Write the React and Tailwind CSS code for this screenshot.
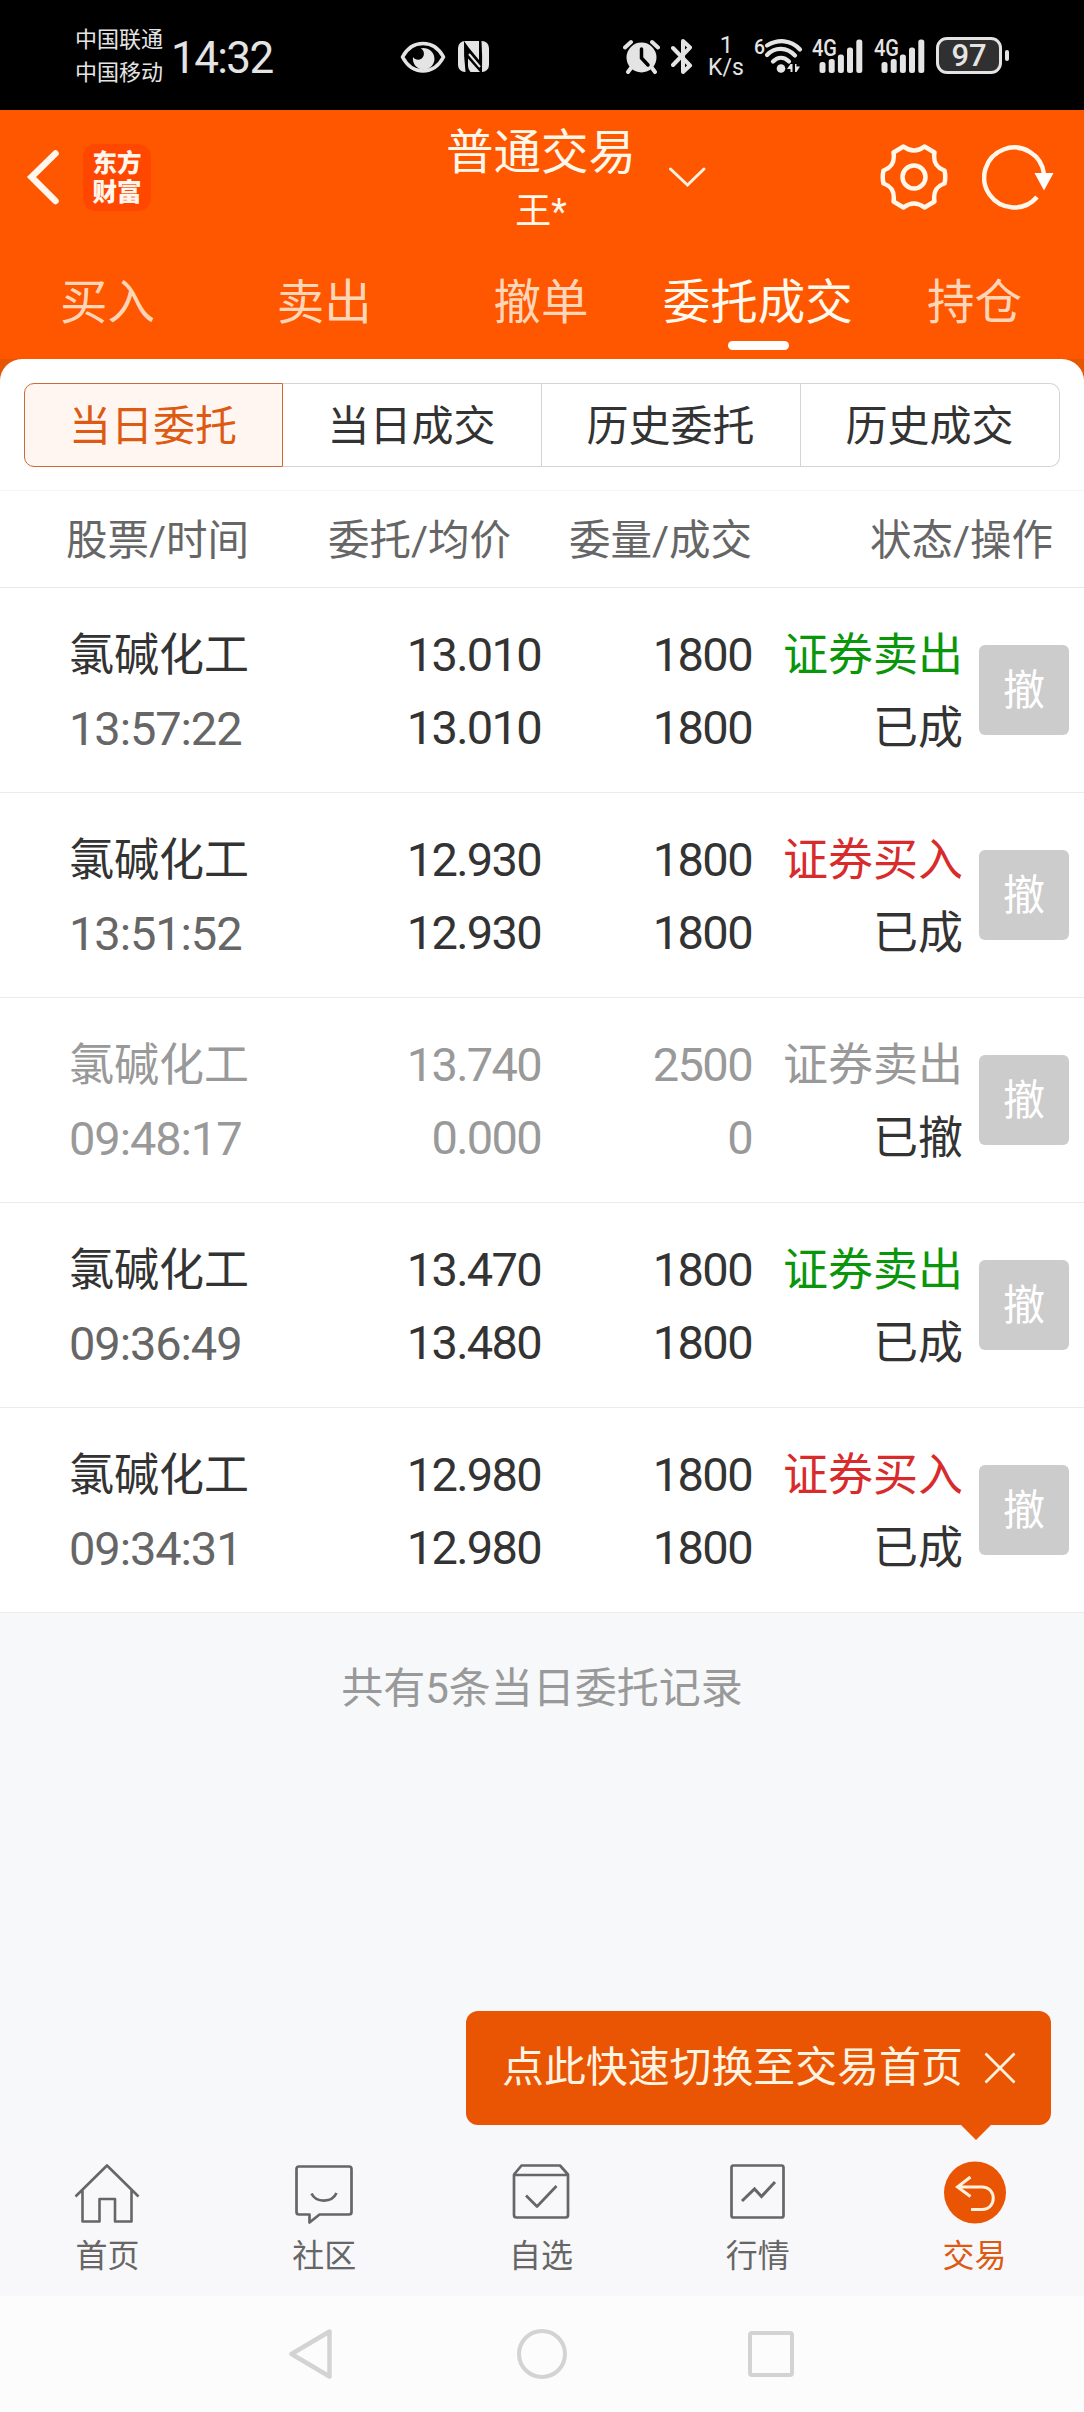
const ROWS = [
  { name: '氯碱化工', time: '13:57:22', price: '13.010', avg: '13.010', qty: '1800', done: '1800', side: '证券卖出', state: '已成', tone: 'sell' },
  { name: '氯碱化工', time: '13:51:52', price: '12.930', avg: '12.930', qty: '1800', done: '1800', side: '证券买入', state: '已成', tone: 'buy' },
  { name: '氯碱化工', time: '09:48:17', price: '13.740', avg: '0.000', qty: '2500', done: '0', side: '证券卖出', state: '已撤', tone: 'off' },
  { name: '氯碱化工', time: '09:36:49', price: '13.470', avg: '13.480', qty: '1800', done: '1800', side: '证券卖出', state: '已成', tone: 'sell' },
  { name: '氯碱化工', time: '09:34:31', price: '12.980', avg: '12.980', qty: '1800', done: '1800', side: '证券买入', state: '已成', tone: 'buy' },
];

const TONES = {
  sell: { side: 'text-[#0a960a]', main: 'text-[#333333]', time: 'text-[#666666]' },
  buy: { side: 'text-[#d82c2c]', main: 'text-[#333333]', time: 'text-[#666666]' },
  off: { side: 'text-[#999999]', main: 'text-[#999999]', time: 'text-[#999999]' },
};

function Signal() {
  return (
    <svg className="overflow-visible" width="51" height="36" viewBox="0 0 51 36" fill="#e4e4e4">
      <text x="0" y="17.5" fontSize="23" fontFamily="Roboto, sans-serif" fontWeight="500" textLength="25" lengthAdjust="spacingAndGlyphs">4G</text>
      <rect x="7.5" y="24" width="6" height="11" rx="2.5" />
      <rect x="16.7" y="21" width="6" height="14" rx="2.5" />
      <rect x="25.9" y="16.500" width="6" height="18.500" rx="2.500" />
      <rect x="35" y="9.500" width="6" height="25.500" rx="2.500" />
      <rect x="44.3" y="1.500" width="6" height="33.500" rx="2.500" />
    </svg>
  );
}

function StatusBar() {
  return (
    <div className="flex h-[110px] items-start bg-black text-[#e4e4e4]">
      <div className="ml-[75px] mt-[23px] w-[89px] text-[22px] leading-[33px]">
        <div>中国联通</div>
        <div>中国移动</div>
      </div>
      <div className="ml-[7px] mt-[36px] w-[106px] whitespace-nowrap text-[44px] leading-[44px] tracking-[-1.6px]">14:32</div>
      <svg className="ml-[123px] mt-[40px]" width="46" height="34" viewBox="0 0 46 34">
        <path d="M2.500 17C7 8.500 14 3.500 23 3.500S39 8.500 43.500 17C39 25.500 32 31 23 31S7 25.500 2.500 17Z" fill="none" stroke="#e4e4e4" strokeWidth="3.600" strokeLinejoin="round" />
        <path d="M20.500 8.500A10.800 10.800 0 1 1 13 17C15.500 21 22 20.500 23.500 16C24.500 13 23.500 9.500 20.500 8.500Z" fill="#e4e4e4" />
      </svg>
      <svg className="ml-[12px] mt-[40px]" width="32" height="34" viewBox="0 0 32 34">
        <rect x="0" y="1" width="31" height="31" rx="7" fill="#e4e4e4" />
        <path d="M6 1L11 8L21 20V1H23.500Q24.500 16 24 32H22L10 18.500V26Q10 29 12.500 32H7.500Q5.500 16 6 1Z" fill="#000" />
        <path d="M9 1H10L21 14V16.500L8 2Z" fill="#e4e4e4" />
        <path d="M11 14L22 27" stroke="#e4e4e4" strokeWidth="2" />
      </svg>
      <svg className="ml-[133px] mt-[38px]" width="37" height="37" viewBox="0 0 37 37">
        <circle cx="18.500" cy="19.500" r="15" fill="#e4e4e4" />
        <path d="M8 30L5 34M29 30L32 34M2 9.500L8 4M35 9.500L29 4" stroke="#e4e4e4" strokeWidth="4" strokeLinecap="round" />
        <path d="M18.500 11V20L25 27" stroke="#000" strokeWidth="3.500" fill="none" strokeLinecap="round" />
      </svg>
      <svg className="ml-[11px] mt-[38px]" width="22" height="37" viewBox="0 0 22 37">
        <path d="M2 10L19 27.500L12 34V3L19 9.500L2 27" fill="none" stroke="#e4e4e4" strokeWidth="4" strokeLinecap="round" strokeLinejoin="round" />
      </svg>
      <div className="ml-[15px] mt-[35px] w-[36px] text-center leading-[21px]">
        <div className="pl-[1px] text-[24px]">1</div>
        <div className="text-[23px] leading-[23px]">K/s</div>
      </div>
      <svg className="ml-[10px] mt-[38px] overflow-visible" width="49" height="36" viewBox="0 0 49 36" fill="none" stroke="#e4e4e4">
        <text x="0" y="16" fontSize="21" fontFamily="Roboto, sans-serif" fontWeight="500" fill="#e4e4e4" stroke="none" textLength="11" lengthAdjust="spacingAndGlyphs">6</text>
        <path d="M13 7.500C24 1 37 1.500 46 11.500" strokeWidth="4.200" strokeLinecap="round" />
        <path d="M13 17C21 8.500 33 9 41 17.500" strokeWidth="4.200" strokeLinecap="round" />
        <path d="M19 23.500C24 18.500 30 18.500 35 23.500" strokeWidth="4.200" strokeLinecap="round" />
        <circle cx="27" cy="30.500" r="4.300" fill="#e4e4e4" stroke="none" />
        <path d="M36.500 26V34H38.500V26ZM41 26V34H42.500V26ZM33 31L36.500 26V31ZM42.500 34L46 28.500H42.500Z" fill="#e4e4e4" stroke="none" />
      </svg>
      <div className="ml-[9px] mt-[38px] flex gap-[11px]">
        <Signal />
        <Signal />
      </div>
      <div className="ml-[11px] mt-[37px] flex items-center gap-[3px]">
        <div className="flex h-[37px] w-[66px] items-center justify-center rounded-[11px] border-[3px] border-[#e4e4e4] bg-[#303030] text-[31px] font-medium leading-[31px]">97</div>
        <div className="h-[11px] w-[4px] rounded-full bg-[#e4e4e4]" />
      </div>
    </div>
  );
}

function Header() {
  return (
    <header className="bg-[#ff5600] text-[#fff7ea]">
      <div className="grid h-[134px] grid-cols-[1fr_auto_1fr] items-start">
        <div className="flex items-start">
          <svg className="ml-[26px] mt-[38px]" width="35" height="59" viewBox="0 0 35 59" fill="none" stroke="#fff7ee" strokeWidth="6.500" strokeLinecap="round" strokeLinejoin="miter">
            <path d="M29.500 5.500L5.500 29L29.500 53" />
          </svg>
          <div className="ml-[22px] mt-[34px] flex h-[67px] w-[68px] flex-col items-center justify-center rounded-[13px] bg-[#ff4700] text-[24.500px] font-black leading-[29px] text-[#fff7ee]">
            <div>东方</div>
            <div>财富</div>
          </div>
        </div>
        <div className="mt-[14px] pr-[2px] text-center">
          <div className="text-[47.500px] leading-[58px]">普通交易</div>
          <div className="text-[36px] leading-[60px]">王*</div>
        </div>
        <div className="flex items-start">
          <svg className="ml-[28px] mt-[55px]" width="40" height="24" viewBox="0 0 40 24" fill="none" stroke="#fff1dd" strokeWidth="3" strokeLinecap="round">
            <path d="M4.500 4L21.500 20L38 4" />
          </svg>
          <svg className="ml-[174px] mt-[33px]" width="68" height="68" viewBox="0 0 68 68" fill="none" stroke="#fff7ea" strokeWidth="4.500" strokeLinejoin="round">
            <path d="M23.500 3.500Q34 11.500 44.500 3.500L54.500 9.500C53 19 56 24.500 64.500 27.500Q66 34 64.500 40.500C56 43.500 53 49 54.500 58.500L44.500 64.500Q34 56.500 23.500 64.500L13.500 58.500C15 49 12 43.500 3.500 40.500Q2 34 3.500 27.500C12 24.500 15 19 13.500 9.500Z" />
            <circle cx="34" cy="34" r="11.500" />
          </svg>
          <svg className="ml-[34px] mt-[33px]" width="74" height="68" viewBox="0 0 74 68">
            <path d="M62 31A30 30 0 1 0 55 54" fill="none" stroke="#fff7ea" strokeWidth="4.500" />
            <path d="M52.500 30H71.500L62 47.500Z" fill="#fff" />
          </svg>
        </div>
      </div>
      <nav className="grid h-[115px] grid-cols-5 text-center text-[47.500px]">
        {['买入', '卖出', '撤单', '委托成交', '持仓'].map((t) => (
          <div key={t} className={t === '委托成交' ? 'text-[#fffaf0]' : 'text-[#ffd5b8]'}>
            <div className="mr-[2px] mt-[29px] h-[60px] whitespace-nowrap leading-[60px]">{t}</div>
            {t === '委托成交' && <div className="mx-auto mt-[8px] h-[9px] w-[61px] rounded-full bg-white" />}
          </div>
        ))}
      </nav>
    </header>
  );
}

function Segments() {
  const base = 'flex items-center justify-center border pt-[3px] pr-px';
  return (
    <div className="bg-[#e65502]">
      <div className="h-[131px] rounded-t-[22px] bg-white px-[24px] pt-[24px]">
        <div className="grid h-[84px] grid-cols-4 text-[42px] leading-[60px] text-[#333333]">
          <div className={`${base} rounded-l-[10px] border-[#cc6a3c] bg-[#fff6f2] text-[#dd5a12]`}>当日委托</div>
          <div className={`${base} border-l-0 border-[#d2d4d8]`}>当日成交</div>
          <div className={`${base} border-l-0 border-[#d2d4d8]`}>历史委托</div>
          <div className={`${base} rounded-r-[10px] border-l-0 border-[#d2d4d8]`}>历史成交</div>
        </div>
      </div>
    </div>
  );
}

function Row({ row }) {
  const tone = TONES[row.tone];
  return (
    <div className="flex h-[205px] border-b border-[#ebebeb] bg-white pt-[29px] text-[45px] leading-[73px]">
      <div className="ml-[69px] w-[200px] whitespace-nowrap">
        <div className={`pt-[2px] ${tone.main}`}>{row.name}</div>
        <div className={`text-[47px] tracking-[-1.100px] ${tone.time}`}>{row.time}</div>
      </div>
      <div className={`w-[272px] pt-px text-right text-[47px] tracking-[-1.700px] ${tone.main}`}>
        <div>{row.price}</div>
        <div>{row.avg}</div>
      </div>
      <div className={`w-[211px] pt-px text-right text-[47px] tracking-[-1.600px] ${tone.main}`}>
        <div>{row.qty}</div>
        <div>{row.done}</div>
      </div>
      <div className="w-[211px] pt-[2px] text-right">
        <div className={tone.side}>{row.side}</div>
        <div className="text-[#333333]">{row.state}</div>
      </div>
      <div className="ml-[16px] mt-[28px] flex h-[90px] w-[90px] items-center justify-center rounded-[6px] bg-[#cccccc] pt-[2px] text-[42px] leading-none text-white">撤</div>
    </div>
  );
}

function Orders() {
  return (
    <section>
      <div className="flex h-[98px] border-b border-t border-b-[#e8e8e8] border-t-[#f5f5f5] bg-white text-[41.500px] leading-[99px] text-[#666666]">
        <div className="ml-[66px] w-[262px]">股票/时间</div>
        <div className="w-[241px]">委托/均价</div>
        <div className="w-[301px]">委量/成交</div>
        <div className="whitespace-nowrap">状态/操作</div>
      </div>
      {ROWS.map((row) => <Row key={row.time} row={row} />)}
    </section>
  );
}

const ICONS = {
  首页: (
    <svg width="68" height="64" viewBox="0 0 68 64" fill="none" stroke="#666" strokeWidth="2.600">
      <path d="M2.500 35.500L34 4.500L65.500 35.500M9.500 29V60.500H26.500V38H42V60.500H58.500V29" strokeLinejoin="round" />
    </svg>
  ),
  社区: (
    <svg width="68" height="64" viewBox="0 0 68 64" fill="none" stroke="#666" strokeWidth="2.700" strokeLinejoin="round">
      <path d="M9 5.500H59Q61.500 5.500 61.500 8V51Q61.500 53.500 59 53.500H29.500L19.500 61.500V53.500H9Q6.500 53.500 6.500 51V8Q6.500 5.500 9 5.500Z" />
      <path d="M21.500 32.500C26 42 42 42 46.500 32" />
    </svg>
  ),
  自选: (
    <svg width="68" height="64" viewBox="0 0 68 64" fill="none" stroke="#666" strokeWidth="2.700" strokeLinejoin="round">
      <path d="M7 13.500L14.500 4.500H53L61 13.500V54Q61 56.500 58.500 56.500H9.500Q7 56.500 7 54ZM7 14H61M19 34.500L30 45.500L49.500 25" />
    </svg>
  ),
  行情: (
    <svg width="68" height="64" viewBox="0 0 68 64" fill="none" stroke="#666" strokeWidth="2.700">
      <rect x="7.500" y="4.500" width="52" height="52" rx="2" />
      <path d="M18 40L30.500 28L37.500 35.500L51 21" strokeWidth="3" />
    </svg>
  ),
  交易: (
    <svg width="68" height="64" viewBox="0 0 68 64" fill="none" stroke="#fff1dd" strokeWidth="3">
      <circle cx="34" cy="31.500" r="31" fill="#ea5504" stroke="none" />
      <path d="M29.500 16L16.500 26L29.500 35.500M16.500 26H41C56 26 56 48.500 41 48.500H30" />
    </svg>
  ),
};

function BottomNav() {
  return (
    <nav className="relative grid h-[156px] grid-cols-5 bg-[#f8f8fb]">
      {Object.keys(ICONS).map((label) => (
        <div key={label} className="flex flex-col items-center pr-[2px] pt-[21px]">
          {ICONS[label]}
          <div className={`mt-[9px] text-[32px] leading-[44px] ${label === '交易' ? 'text-[#dd5a12]' : 'text-[#666666]'}`}>{label}</div>
        </div>
      ))}
      <div className="absolute bottom-[171px] right-[33px] flex h-[114px] w-[585px] items-center rounded-[12px] bg-[#ea5504] pl-[36px] text-[41.900px] text-[#fff4e2]">
        <span className="whitespace-nowrap">点此快速切换至交易首页</span>
        <svg className="ml-[21px]" width="32" height="32" viewBox="0 0 32 32" stroke="#fff1dd" strokeWidth="2.800">
          <path d="M1.500 1.500L30.500 30.500M30.500 1.500L1.500 30.500" />
        </svg>
        <svg className="absolute right-[59px] top-[113px]" width="32" height="17" viewBox="0 0 32 17">
          <path d="M0 0H32L16 16Z" fill="#ea5504" />
        </svg>
      </div>
    </nav>
  );
}

function SystemNav() {
  return (
    <div className="flex h-[116px] items-center bg-[#fcfcfc]">
      <svg className="ml-[287px]" width="48" height="54" viewBox="0 0 48 54" fill="none" stroke="#d3d3d3" strokeWidth="4.500" strokeLinejoin="round">
        <path d="M42.500 4.500V49.500L4.500 27Z" />
      </svg>
      <div className="ml-[182px] h-[50px] w-[50px] rounded-full border-[4px] border-[#d3d3d3]" />
      <div className="ml-[181px] h-[46px] w-[46px] rounded-[4px] border-[4px] border-[#d3d3d3]" />
    </div>
  );
}

export default function App() {
  return (
    <div className="flex h-[2412px] w-[1084px] flex-col overflow-hidden bg-[#f6f8fa] font-[Roboto,'Noto_Sans_CJK_SC',sans-serif]">
      <StatusBar />
      <Header />
      <Segments />
      <Orders />
      <div className="mt-[44px] text-center text-[42px] leading-[64px] text-[#999999]">共有5条当日委托记录</div>
      <div className="mt-auto">
        <BottomNav />
        <SystemNav />
      </div>
    </div>
  );
}
